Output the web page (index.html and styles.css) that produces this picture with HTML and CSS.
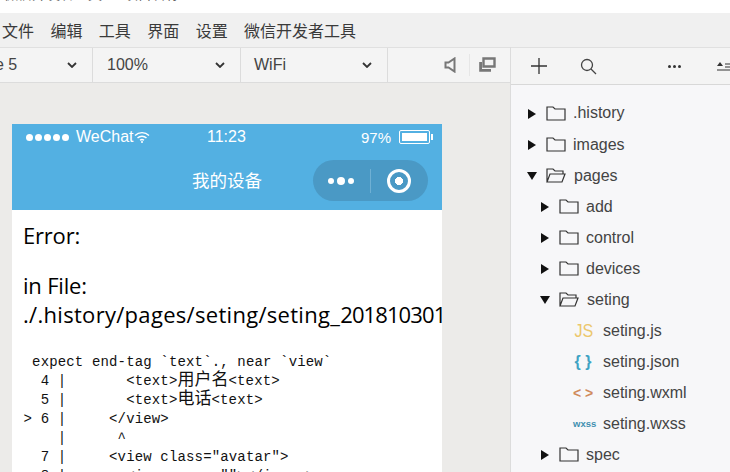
FILE: index.html
```html
<!DOCTYPE html>
<html lang="zh">
<head>
<meta charset="utf-8">
<title>微信开发者工具</title>
<link rel="stylesheet" href="styles.css">
</head>
<body>
<div class="app">
  <div class="titlebar"><span class="title-clip">微信开发者工具 — 项目名称</span></div>
  <nav class="menubar">
    <span>文件</span><span>编辑</span><span>工具</span><span>界面</span><span>设置</span><span>微信开发者工具</span>
  </nav>
  <div class="workspace">
    <section class="sim">
      <div class="toolbar">
        <div class="select sel-device"><span>iPhone 5</span><svg class="chev" viewBox="0 0 10 6"><path d="M1 1l4 4 4-4" fill="none" stroke="#333" stroke-width="1.8"/></svg></div>
        <div class="select sel-zoom"><span>100%</span><svg class="chev" viewBox="0 0 10 6"><path d="M1 1l4 4 4-4" fill="none" stroke="#333" stroke-width="1.8"/></svg></div>
        <div class="select sel-net"><span>WiFi</span><svg class="chev" viewBox="0 0 10 6"><path d="M1 1l4 4 4-4" fill="none" stroke="#333" stroke-width="1.8"/></svg></div>
        <div class="tool-icons">
          <svg class="ic-sound" viewBox="0 0 12 16"><path d="M1.500 5.500h3l6-4v13l-6-4h-3z" fill="none" stroke="#777" stroke-width="2"/></svg>
          <i class="tool-sep"></i>
          <svg class="ic-windows" viewBox="0 0 18 16"><path d="M5.500 1.500h11v8h-11z" fill="none" stroke="#777" stroke-width="2.400"/><path d="M1.200 5v9.800H13V12H4V5z" fill="#777"/></svg>
        </div>
      </div>
      <div class="stage">
        <div class="phone">
          <div class="phone-head">
            <div class="status">
              <div class="st-left"><span class="signal"><i></i><i></i><i></i><i></i><i></i></span><span>WeChat</span>
                <svg class="wifi" viewBox="0 0 16 12"><path d="M1 4.500a10 10 0 0 1 14 0M3.500 7a6.500 6.500 0 0 1 9 0M6 9.300a3 3 0 0 1 4 0" fill="none" stroke="#fff" stroke-width="1.400"/><circle cx="8" cy="11" r="1" fill="#fff"/></svg>
              </div>
              <div class="st-time">11:23</div>
              <div class="st-right"><span>97%</span><span class="battery"><i></i></span><span class="nub"></span></div>
            </div>
            <div class="navbar">
              <span class="nav-title">我的设备</span>
              <div class="capsule">
                <span class="dots"><i></i><b></b><i></i></span>
                <i class="cap-sep"></i>
                <span class="target"></span>
              </div>
            </div>
          </div>
          <div class="phone-body">
            <p class="err">Error:</p>
            <p class="err file">in File:<br><span class="path">./.history/pages/seting/seting_<span class="stamp">20181030135325</span>.wxml</span></p>
            <pre class="code">  expect end-tag `text`., near `view`
   4 |       &lt;text&gt;<span class="cjk">用户名</span>&lt;text&gt;
   5 |       &lt;text&gt;<span class="cjk">电话</span>&lt;text&gt;
 &gt; 6 |     &lt;/view&gt;
     |      ^
   7 |     &lt;view class="avatar"&gt;
   8 |       &lt;image src=""&gt;&lt;/image&gt;</pre>
          </div>
        </div>
      </div>
    </section>
    <aside class="files">
      <div class="files-bar">
        <svg class="ic-plus" viewBox="0 0 16 16"><path d="M8 0v16M0 8h16" stroke="#333" stroke-width="1.300" fill="none"/></svg>
        <svg class="ic-search" viewBox="0 0 17 17"><circle cx="7" cy="7" r="5.500" fill="none" stroke="#444" stroke-width="1.300"/><path d="M11 11l5 5" stroke="#444" stroke-width="1.300"/></svg>
        <span class="ic-more"><i></i><i></i><i></i></span>
        <svg class="ic-sort" viewBox="0 0 16 10"><path d="M0 5l3-4 3 4z" fill="#333"/><path d="M8 3h8M8 6h8M0 9h16" stroke="#333" stroke-width="1.200"/></svg>
      </div>
      <ul class="tree">
        <li class="row d0"><svg class="arrow" viewBox="0 0 8 10"><path d="M0 0l8 5-8 5z"/></svg><svg class="folder" viewBox="0 0 20 15"><path d="M1 14V1h6l2 2h10v11z" fill="none" stroke="#333" stroke-width="1.200"/></svg><span class="hist">.history</span></li>
        <li class="row d0"><svg class="arrow" viewBox="0 0 8 10"><path d="M0 0l8 5-8 5z"/></svg><svg class="folder" viewBox="0 0 20 15"><path d="M1 14V1h6l2 2h10v11z" fill="none" stroke="#333" stroke-width="1.200"/></svg><span>images</span></li>
        <li class="row d0"><svg class="arrow open" viewBox="0 0 10 8"><path d="M0 0h10l-5 8z"/></svg><svg class="folder" viewBox="0 0 20 15"><path d="M1 14V1h6l2 2h8v3M1 14l3-8h15l-3 8z" fill="none" stroke="#333" stroke-width="1.200"/></svg><span class="open-name">pages</span></li>
        <li class="row d1"><svg class="arrow" viewBox="0 0 8 10"><path d="M0 0l8 5-8 5z"/></svg><svg class="folder" viewBox="0 0 20 15"><path d="M1 14V1h6l2 2h10v11z" fill="none" stroke="#333" stroke-width="1.200"/></svg><span>add</span></li>
        <li class="row d1"><svg class="arrow" viewBox="0 0 8 10"><path d="M0 0l8 5-8 5z"/></svg><svg class="folder" viewBox="0 0 20 15"><path d="M1 14V1h6l2 2h10v11z" fill="none" stroke="#333" stroke-width="1.200"/></svg><span>control</span></li>
        <li class="row d1"><svg class="arrow" viewBox="0 0 8 10"><path d="M0 0l8 5-8 5z"/></svg><svg class="folder" viewBox="0 0 20 15"><path d="M1 14V1h6l2 2h10v11z" fill="none" stroke="#333" stroke-width="1.200"/></svg><span>devices</span></li>
        <li class="row d1"><svg class="arrow open" viewBox="0 0 10 8"><path d="M0 0h10l-5 8z"/></svg><svg class="folder" viewBox="0 0 20 15"><path d="M1 14V1h6l2 2h8v3M1 14l3-8h15l-3 8z" fill="none" stroke="#333" stroke-width="1.200"/></svg><span class="open-name">seting</span></li>
        <li class="row file-row"><span class="fi fi-js">JS</span><span>seting.js</span></li>
        <li class="row file-row"><span class="fi fi-json">{ }</span><span>seting.json</span></li>
        <li class="row file-row"><span class="fi fi-wxml">&lt; &gt;</span><span>seting.wxml</span></li>
        <li class="row file-row"><span class="fi fi-wxss">wxss</span><span>seting.wxss</span></li>
        <li class="row d1"><svg class="arrow" viewBox="0 0 8 10"><path d="M0 0l8 5-8 5z"/></svg><svg class="folder" viewBox="0 0 20 15"><path d="M1 14V1h6l2 2h10v11z" fill="none" stroke="#333" stroke-width="1.200"/></svg><span>spec</span></li>
      </ul>
    </aside>
  </div>
</div>
</body>
</html>
```

FILE: styles.css
```css
* { box-sizing: border-box; }
html, body { margin: 0; padding: 0; }
body {
  width: 730px;
  height: 472px;
  overflow: hidden;
  background: #fff;
  font-family: "Liberation Sans", "Noto Sans CJK SC", sans-serif;
  color: #333;
}
.app { width: 730px; height: 472px; display: flex; flex-direction: column; overflow: hidden; }

.titlebar { height: 13px; flex: none; background: #fff; overflow: hidden; }
.title-clip { display: block; margin: -14px 0 0 4px; font-size: 14px; line-height: 16px; color: #666; }

.menubar {
  height: 34px; flex: none;
  display: flex; align-items: center; gap: 16.400px;
  padding: 0 0 0 2px;
  background: #f0f0f0;
  font-size: 16px;
  color: #3a3a3a;
}

.workspace { flex: 1; display: flex; min-height: 0; }
.sim { width: 510px; flex: none; display: flex; flex-direction: column; background: #ecebe9; }

.toolbar {
  height: 36px; flex: none;
  display: flex;
  background: #f4f4f4;
  border-top: 1px solid #e0e0e0;
  border-bottom: 1px solid #dcdcdc;
  font-size: 16px;
  line-height: 30px;
  color: #444;
}
.select {
  display: flex; align-items: center; justify-content: space-between;
  border-right: 1px solid #dcdcdc;
  overflow: hidden;
}
.sel-device { width: 93px; padding-right: 15px; }
.sel-device span { margin-left: -46px; white-space: nowrap; }
.sel-zoom { width: 148px; padding: 0 15px 0 14px; }
.sel-net { width: 147px; padding: 0 15px 0 13px; }
.chev { width: 10px; height: 6px; }
.tool-icons { flex: 1; display: flex; align-items: center; padding-left: 56px; }
.ic-sound { width: 12px; height: 16px; flex: none; }
.tool-sep { width: 1px; height: 22px; background: #e6e6e6; margin: 0 8px 0 13px; flex: none; }
.ic-windows { width: 18px; height: 16px; flex: none; }

.stage { flex: 1; min-height: 0; padding: 41px 68px 0 12px; overflow: hidden; }
.phone { width: 430px; height: 400px; background: #fff; overflow: hidden; }
.phone-head { height: 86px; background: #53b0e2; color: #fff; display: flex; flex-direction: column; }

.status { height: 26px; flex: none; position: relative; display: flex; align-items: center; justify-content: space-between; padding: 0 9px 0 14px; font-size: 16px; }
.st-left { display: flex; align-items: center; }
.signal { display: flex; gap: 2px; margin-right: 7px; }
.signal i { width: 7px; height: 7px; border-radius: 50%; background: #fff; }
.wifi { width: 16px; height: 12px; }
.st-time { position: absolute; left: 195px; top: 4px; }
.st-right { display: flex; align-items: center; font-size: 15px; }
.battery { width: 31px; height: 14px; border: 1px solid #fff; border-radius: 2px; padding: 2px; margin-left: 8px; display: block; }
.battery i { display: block; height: 100%; background: #fff; }
.nub { width: 2px; height: 6px; background: #fff; margin-left: 1px; }

.navbar { flex: 1; position: relative; display: flex; align-items: center; justify-content: center; }
.nav-title { font-size: 17.500px; margin-top: -2px; }
.capsule {
  position: absolute; right: 14px; top: 10px;
  width: 115px; height: 41px;
  border-radius: 21px;
  background: #4a99c5;
  display: flex; align-items: center;
}
.dots { display: flex; align-items: center; gap: 3px; margin-left: 15px; width: 28px; flex: none; }
.dots i { width: 6px; height: 6px; border-radius: 50%; background: #fff; }
.dots b { width: 8px; height: 8px; border-radius: 50%; background: #fff; }
.cap-sep { width: 1px; height: 24px; background: #6fb0d4; margin-left: 14px; }
.target {
  width: 24px; height: 24px; margin-left: 16px;
  border: 3px solid #fff; border-radius: 50%;
  background: radial-gradient(circle, #fff 0 3.800px, transparent 4.300px);
}

.phone-body { padding: 0 0 0 11px; color: #000; }
.err { margin: 0; font-size: 22px; line-height: 29px; white-space: nowrap; font-family: "Open Sans", "Liberation Sans", sans-serif; letter-spacing: -0.200px; }
.err:first-child { padding-top: 11px; }
.file { margin-top: 21px; }
.path { letter-spacing: 0.300px; }
.stamp { letter-spacing: -0.900px; }
.code {
  margin: 24px 0 0 -11px;
  padding-left: 3px;
  font-family: "Liberation Mono", "Noto Sans CJK SC", monospace;
  font-size: 14px;
  letter-spacing: 0.150px;
  line-height: 19px;
  color: #111;
}
.cjk { font-size: 17px; letter-spacing: 0; line-height: 1; }

.files { flex: 1; background: #f7f7f9; border-left: 1px solid #dcdcdc; display: flex; flex-direction: column; min-width: 0; overflow: hidden; }
.files-bar { height: 38px; flex: none; background: #f4f4f4; border-top: 1px solid #e0e0e0; border-bottom: 1px solid #d8d8d8; display: flex; align-items: center; padding-left: 20px; }
.ic-plus { width: 16px; height: 16px; flex: none; }
.ic-search { width: 17px; height: 17px; margin-left: 33px; flex: none; }
.ic-more { display: flex; gap: 2px; margin-left: 71px; flex: none; }
.ic-more i { width: 3px; height: 3px; border-radius: 50%; background: #333; }
.ic-sort { width: 16px; height: 10px; margin-left: 36px; flex: none; }

.tree { list-style: none; margin: 0; padding: 13px 0 0; font-size: 16px; color: #444; }
.row { height: 31px; display: flex; align-items: center; white-space: nowrap; }
.d0 { padding-left: 17px; }
.d1 { padding-left: 30px; }
.arrow { width: 8px; height: 10px; flex: none; fill: #111; margin-right: 10px; }
.arrow.open { width: 10px; height: 8px; margin-left: -1px; margin-right: 9px; }
.folder { width: 20px; height: 15px; flex: none; margin-right: 7px; }
.hist { margin-top: -2px; }
.open-name { margin-left: 1px; }
.file-row { padding-left: 62px; }
.fi { flex: none; display: block; text-align: center; font-weight: bold; }
.fi-js { color: #ecc76d; font-size: 19px; font-weight: normal; width: 20px; margin-right: 10px; transform: scaleX(.85); }
.fi-json { color: #3fa3c4; font-size: 16px; width: 20px; margin-right: 10px; }
.fi-wxml { color: #d08a5c; font-size: 14px; width: 20px; margin-right: 10px; }
.fi-wxss { color: #3f8fb0; font-size: 9.500px; width: 22px; margin-right: 8px; }
```
